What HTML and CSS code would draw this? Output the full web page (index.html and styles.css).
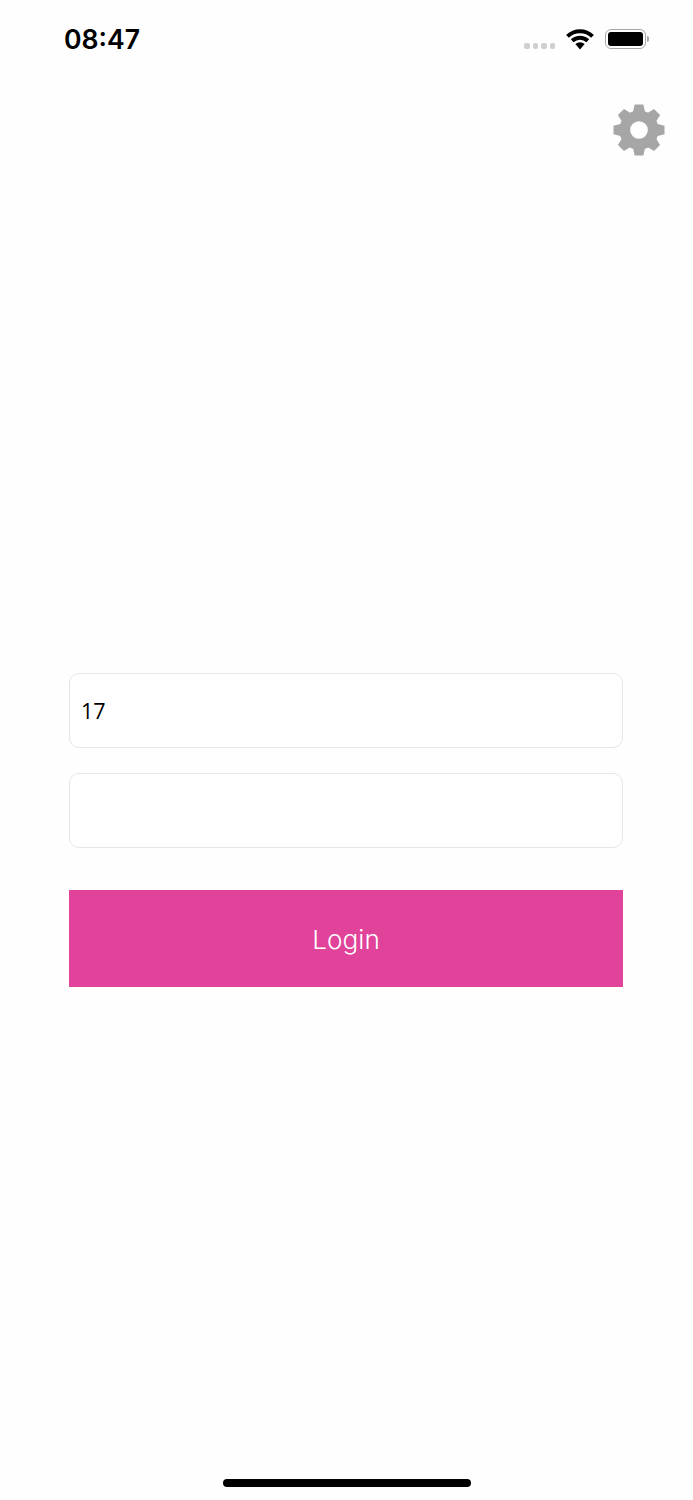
FILE: index.html
```html
<!DOCTYPE html>
<html>
<head>
    <title>Login</title>
    <link rel="stylesheet" href="styles.css">
</head>
<body>
    <div class="page">
        <div class="status-bar">
            <span class="time">08:47</span>
            <div class="status-icons">
                <div class="signal">
                    <span class="dot"></span>
                    <span class="dot"></span>
                    <span class="dot"></span>
                    <span class="dot"></span>
                </div>
                <svg class="wifi" width="28" height="22" viewBox="0 0 28 22">
                    <path d="M1.5 8.4 A18 18 0 0 1 26.5 8.4" fill="none" stroke="#000" stroke-width="4"/>
                    <path d="M6.2 12.8 A11.4 11.4 0 0 1 21.8 12.8" fill="none" stroke="#000" stroke-width="4"/>
                    <path d="M9.4 16 L14 21.5 L18.6 16 A6.6 6.6 0 0 0 9.4 16 Z" fill="#000"/>
                </svg>
                <div class="battery">
                    <div class="battery-body"><div class="battery-level"></div></div>
                    <div class="battery-cap"></div>
                </div>
            </div>
        </div>

        <div class="top-row">
            <svg class="gear" width="52" height="52" viewBox="-26.5 -26.5 53 53">
                <defs>
                    <polygon id="tooth" points="-6.5,-17 -4.4,-26 4.4,-26 6.5,-17"/>
                </defs>
                <circle r="14.5" fill="none" stroke="#a6a6a6" stroke-width="11"/>
                <use href="#tooth" fill="#a6a6a6"/>
                <use href="#tooth" fill="#a6a6a6" transform="rotate(45)"/>
                <use href="#tooth" fill="#a6a6a6" transform="rotate(90)"/>
                <use href="#tooth" fill="#a6a6a6" transform="rotate(135)"/>
                <use href="#tooth" fill="#a6a6a6" transform="rotate(180)"/>
                <use href="#tooth" fill="#a6a6a6" transform="rotate(225)"/>
                <use href="#tooth" fill="#a6a6a6" transform="rotate(270)"/>
                <use href="#tooth" fill="#a6a6a6" transform="rotate(315)"/>
            </svg>
        </div>

        <div class="form">
            <div class="field">17</div>
            <div class="field"></div>
            <div class="login-btn">Login</div>
        </div>

        <div class="home-bar"></div>
    </div>
</body>
</html>
```

FILE: styles.css
```css
body {
    margin: 0;
    background-color: #fefefe;
    font-family: "Open Sans", sans-serif;
}
.page {
    height: 1500px;
    display: flex;
    flex-direction: column;
    overflow: hidden;
}
.status-bar {
    height: 78px;
    display: flex;
    align-items: center;
    justify-content: space-between;
    padding: 0 44px 0 64px;
}
.time {
    font-family: Inter, sans-serif;
    font-size: 26.6px;
    font-weight: 600;
    color: #000;
}
.status-icons {
    display: flex;
    align-items: center;
}
.signal {
    display: flex;
    gap: 3px;
    margin-top: 14px;
    margin-right: 11px;
}
.dot {
    width: 5.5px;
    height: 6px;
    border-radius: 2px;
    background-color: #cfcfcf;
}
.wifi {
    margin-right: 11px;
    margin-top: -1px;
}
.battery {
    display: flex;
    align-items: center;
}
.battery-body {
    box-sizing: border-box;
    width: 41px;
    height: 20px;
    padding: 2px;
    border: 1.5px solid #a8a8a8;
    border-radius: 6px;
}
.battery-level {
    height: 100%;
    background-color: #000;
    border-radius: 3px;
}
.battery-cap {
    width: 2px;
    height: 6px;
    margin-left: 1px;
    background-color: #a8a8a8;
    border-radius: 0 2px 2px 0;
}
.top-row {
    display: flex;
    justify-content: flex-end;
    padding: 26px 28px 0 0;
}
.form {
    display: flex;
    flex-direction: column;
    margin: 517px 70px 0 69px;
}
.field {
    box-sizing: border-box;
    height: 75px;
    margin-bottom: 25px;
    padding-left: 11px;
    display: flex;
    align-items: center;
    border: 1.5px solid #e6e6e6;
    border-radius: 10px;
    background-color: #fff;
    font-size: 21.5px;
    color: #000;
}
.login-btn {
    box-sizing: border-box;
    height: 97px;
    margin-top: 17px;
    padding-top: 2px;
    display: flex;
    align-items: center;
    justify-content: center;
    background-color: #e1429a;
    font-family: Inter, sans-serif;
    font-size: 26.2px;
    font-weight: 300;
    color: #fff;
}
.home-bar {
    width: 248px;
    height: 8px;
    margin: auto auto 13px;
    border-radius: 4px;
    background-color: #000;
}
```
